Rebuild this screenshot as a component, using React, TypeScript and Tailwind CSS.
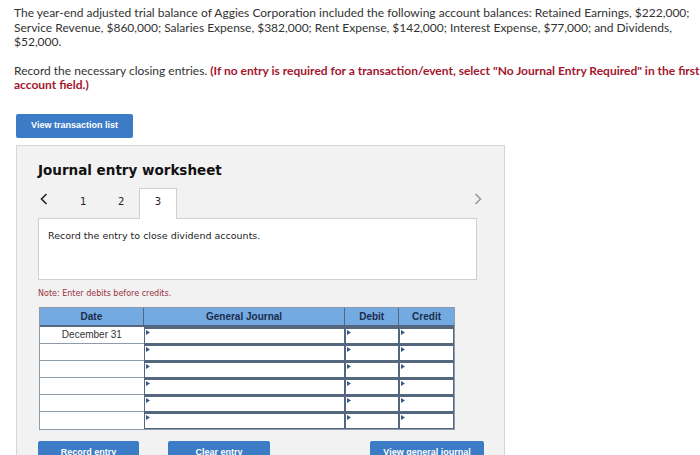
import React from 'react';

const Tri = () => (
    <svg width="4" height="5" viewBox="0 0 4 5" className="absolute left-[1px] top-[1px]">
        <path d="M0 0 L4 2.5 L0 5 Z" fill="#3a5a86" />
    </svg>
);

const InputCell: React.FC<{ w: string }> = ({ w }) => (
    <div className={`relative ${w} h-full bg-white border border-[#55677e] border-t-2`}>
        <Tri />
    </div>
);

const Chevron: React.FC<{ dir: 'l' | 'r'; color: string }> = ({ dir, color }) => (
    <svg width="8" height="12" viewBox="0 0 8 12">
        <path d={dir === 'l' ? 'M6.5 1 L1.5 6 L6.5 11' : 'M1.5 1 L6.5 6 L1.5 11'} fill="none" stroke={color} strokeWidth="1.6" />
    </svg>
);

const rows = ['December 31', '', '', '', '', ''];

const App: React.FC = () => {
    return (
        <div className="w-[700px] h-[455px] overflow-hidden bg-white pl-[14px] pt-[6px] text-[#333]" style={{ fontFamily: 'Lato, "Open Sans", sans-serif' }}>
            <p className="text-[12px] leading-[14.5px] pr-[10px]">
                The year-end adjusted trial balance of Aggies Corporation included the following account balances: Retained Earnings, $222,000; Service Revenue, $860,000; Salaries Expense, $382,000; Rent Expense, $142,000; Interest Expense, $77,000; and Dividends, $52,000.
            </p>
            <p className="text-[12px] leading-[14.5px] mt-[14px]">
                Record the necessary closing entries.{' '}
                <span className="font-bold text-[#a3162e]">
                    (If no entry is required for a transaction/event, select "No Journal Entry Required" in the first account field.)
                </span>
            </p>
            <button
                className="mt-[21px] ml-[2px] w-[117px] h-[24px] rounded-[2px] bg-[#3c7bc6] text-white text-[9px] font-bold"
                style={{ fontFamily: '"Liberation Sans", Arial, sans-serif' }}
            >
                View transaction list
            </button>
            <div className="mt-[7px] ml-[2px] w-[489px] h-[320px] bg-[#f2f2f2] border border-[#d6d6d6] pl-[21px] pt-[15px]">
                <h2 className="text-[13.5px] leading-[18px] font-bold text-[#111]" style={{ fontFamily: '"DejaVu Sans", Verdana, sans-serif' }}>
                    Journal entry worksheet
                </h2>
                <div className="relative mt-[9px] h-[30px] w-[439px] text-[10px]" style={{ fontFamily: '"DejaVu Sans", Verdana, sans-serif' }}>
                    <span className="absolute left-[2px] top-[5px]"><Chevron dir="l" color="#222" /></span>
                    <span className="absolute left-[42px] top-[6px] text-[#222]">1</span>
                    <span className="absolute left-[80px] top-[6px] text-[#222]">2</span>
                    <div className="absolute left-[101px] top-0 w-[38px] h-[31px] bg-white border border-b-0 border-[#cfcfcf] z-10 flex justify-center pt-[5px] text-[#222]">3</div>
                    <span className="absolute right-[-5px] top-[5px]"><Chevron dir="r" color="#9a9a9a" /></span>
                </div>
                <div className="w-[439px] h-[62px] bg-white border border-[#cfcfcf] pl-[9px] pt-[10px] text-[9.5px] text-[#222]" style={{ fontFamily: '"DejaVu Sans", Verdana, sans-serif' }}>
                    Record the entry to close dividend accounts.
                </div>
                <div className="mt-[8px] text-[8px] text-[#9b3040]" style={{ fontFamily: '"DejaVu Sans", Verdana, sans-serif' }}>
                    Note: Enter debits before credits.
                </div>
                <div className="mt-[7px] ml-[1px] w-[416px] border border-[#8d9bab]" style={{ fontFamily: '"Liberation Sans", Arial, sans-serif' }}>
                    <div className="flex h-[19px] bg-[#74aae2] text-[10px] font-bold text-[#1b2c4a] border-b-2 border-[#55677e]">
                        <div className="w-[104px] flex items-center justify-center border-r border-[#55677e]">Date</div>
                        <div className="w-[202px] flex items-center justify-center border-r border-[#55677e]">General Journal</div>
                        <div className="w-[54px] flex items-center justify-center border-r border-[#55677e]">Debit</div>
                        <div className="w-[55px] flex items-center justify-center">Credit</div>
                    </div>
                    {rows.map((d, i) => (
                        <div key={i} className="flex h-[17px]">
                            <div className={`w-[104px] bg-white flex items-center justify-center text-[10px] text-[#333] ${i < rows.length - 1 ? 'border-b border-[#8d9bab]' : ''}`}>
                                {d}
                            </div>
                            <InputCell w="w-[202px]" />
                            <InputCell w="w-[54px]" />
                            <InputCell w="w-[55px]" />
                        </div>
                    ))}
                </div>
                <div className="mt-[11px] flex text-[9px] font-bold text-white" style={{ fontFamily: '"Liberation Sans", Arial, sans-serif' }}>
                    <button className="w-[101px] h-[24px] rounded-[2px] bg-[#3c7bc6]">Record entry</button>
                    <button className="ml-[29px] w-[102px] h-[24px] rounded-[2px] bg-[#3c7bc6]">Clear entry</button>
                    <button className="ml-[100px] w-[114px] h-[24px] rounded-[2px] bg-[#3c7bc6]">View general journal</button>
                </div>
            </div>
        </div>
    );
};

export default App;
